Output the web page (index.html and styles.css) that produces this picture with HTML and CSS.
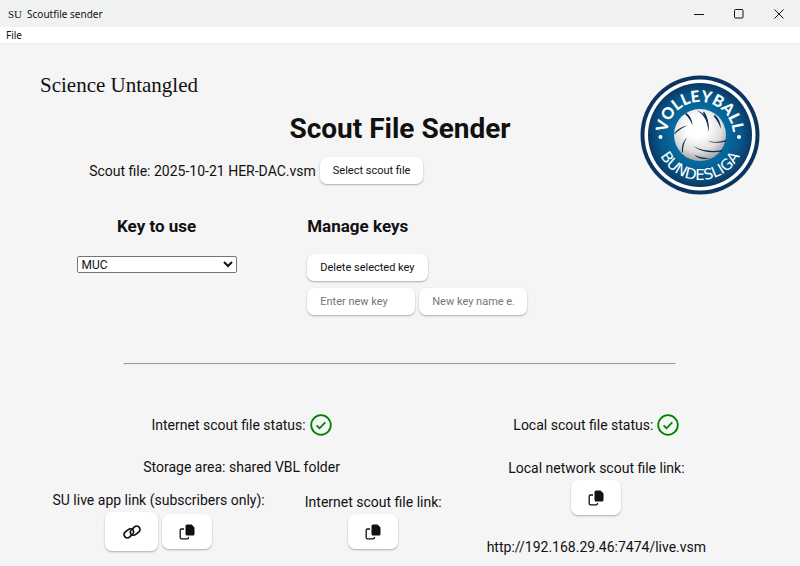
FILE: index.html
```html
<!DOCTYPE html>
<html lang="en">
<head>
    <meta charset="UTF-8">
    <meta name="viewport" content="width=device-width, initial-scale=1.0">
    <title>Scoutfile sender</title>
    <link rel="stylesheet" href="styles.css">
</head>
<body>
    <svg class="defs" width="0" height="0" aria-hidden="true">
        <symbol id="icon-copy" viewBox="0 0 16 16">
            <path d="M8 .5h4.600l2.900 2.900v6.600a1.500 1.500 0 0 1-1.500 1.500H8A1.500 1.500 0 0 1 6.500 10V2A1.500 1.500 0 0 1 8 .5z" fill="#111"/>
            <path d="M5 5H2.500a1.300 1.300 0 0 0-1.300 1.300v7.200a1.300 1.300 0 0 0 1.300 1.300h5.700a1.300 1.300 0 0 0 1.300-1.300V13" fill="none" stroke="#111" stroke-width="1.300"/>
        </symbol>
        <symbol id="icon-link" viewBox="0 0 18 16">
            <g fill="none" stroke="#111" stroke-width="1.700" stroke-linecap="round">
                <path d="M8.300 11.300L6.700 12.900a3.300 3.300 0 0 1-4.700-4.700L5.300 5.600a3.300 3.300 0 0 1 5 .7c.7 1.300.5 2.600-.5 3.700"/>
                <path d="M9.700 4.700l1.600-1.600a3.300 3.300 0 0 1 4.700 4.700l-3.300 2.600a3.300 3.300 0 0 1-5-.7c-.7-1.300-.5-2.600.5-3.700"/>
            </g>
        </symbol>
        <symbol id="icon-check" viewBox="0 0 22 22">
            <circle cx="11" cy="11" r="9.800" fill="none" stroke="green" stroke-width="1.800"/>
            <path d="M6.600 11.400l2.900 2.900 5.800-6" fill="none" stroke="green" stroke-width="1.800"/>
        </symbol>
    </svg>

    <div class="titlebar">
        <span class="app-icon">SU</span>
        <span class="app-title">Scoutfile sender</span>
        <button class="win-btn" aria-label="Minimize"><svg width="10" height="10"><path d="M0 5.500h10" stroke="#111"/></svg></button>
        <button class="win-btn" aria-label="Maximize"><svg width="10" height="10"><rect x=".5" y=".5" width="8.500" height="8.500" rx="1" fill="none" stroke="#111"/></svg></button>
        <button class="win-btn" aria-label="Close"><svg width="10" height="10"><path d="M.5 .5l9 9M9.500 .5l-9 9" stroke="#111"/></svg></button>
    </div>
    <nav class="menubar"><button class="menu-btn">File</button></nav>

    <main>
        <header class="top">
            <div class="brand">Science Untangled</div>
            <h1>Scout File Sender</h1>
            <svg class="badge" viewBox="0 0 120 120" role="img" aria-label="Volleyball Bundesliga">
                <defs>
                    <radialGradient id="blue">
                        <stop offset=".5" stop-color="#046ba3"/>
                        <stop offset=".8" stop-color="#075687"/>
                        <stop offset="1" stop-color="#0a3763"/>
                    </radialGradient>
                    <radialGradient id="ball" cx=".45" cy=".35" r=".68">
                        <stop offset=".3" stop-color="#fff"/>
                        <stop offset=".7" stop-color="#ddd"/>
                        <stop offset="1" stop-color="#999"/>
                    </radialGradient>
                    <path id="arc-top" d="M60 93a33 33 0 0 1 0-66a33 33 0 0 1 0 66"/>
                    <path id="arc-bottom" d="M60 15a45 45 0 0 0 0 90a45 45 0 0 0 0-90"/>
                </defs>
                <circle cx="60" cy="60" r="59.500" fill="#0b3560"/>
                <circle cx="60" cy="60" r="55.500" fill="#fff"/>
                <circle cx="60" cy="60" r="52" fill="url(#blue)"/>
                <circle cx="60" cy="60" r="26" fill="url(#ball)"/>
                <g fill="#0b2c52">
                    <path d="M46.500 38q5.500 4 6 12.500q-2.500-7-7.500-11.500z"/>
                    <path d="M57 35.500q13 4 11.500 21.500q-1-16-11.500-21.500z"/>
                    <path d="M64 36.500q5.500 7 4.500 20q-1-12-5.500-19z"/>
                    <path d="M75 40q5.500 5 6 14q-3-8-7.500-13z"/>
                    <path d="M34.500 58q4.500-6 13-7.500q-7.500 3-13 9z"/>
                    <path d="M42 77q-1-9 5-14.500q-4.500 7-4 15.500z"/>
                    <path d="M53 71q13 7 30 4l-1.500 1.500q-17 3-28.500-5.500z"/>
                    <path d="M67 65.500q8 3 19-.5v1.500q-12 3-19-1z"/>
                    <path d="M54 80q9 4 17 3q-10 3-17-3z"/>
                </g>
                <circle cx="20.500" cy="62" r="2" fill="#fff"/>
                <circle cx="99" cy="62" r="2" fill="#fff"/>
                <text class="badge-top"><textPath href="#arc-top" startOffset="50%">VOLLEYBALL</textPath></text>
                <text class="badge-bottom"><textPath href="#arc-bottom" startOffset="50%">BUNDESLIGA</textPath></text>
            </svg>
            <div class="file-row">
                <span>Scout file: 2025-10-21 HER-DAC.vsm</span>
                <button class="btn">Select scout file</button>
            </div>
        </header>

        <section class="keys">
            <div class="key-use">
                <h2><label for="key">Key to use</label></h2>
                <select id="key">
                    <option>MUC</option>
                </select>
            </div>
            <div class="key-manage">
                <h2>Manage keys</h2>
                <button class="btn">Delete selected key</button>
                <div class="new-key">
                    <input class="btn" type="text" placeholder="Enter new key" aria-label="New key">
                    <input class="btn" type="text" placeholder="New key name e.g. club" aria-label="New key name">
                </div>
            </div>
        </section>

        <hr>

        <section class="status">
            <div class="internet">
                <p class="state">Internet scout file status: <svg class="check"><use href="#icon-check"/></svg></p>
                <p class="storage">Storage area: shared VBL folder</p>
                <div class="links">
                    <div>
                        <p>SU live app link (subscribers only):</p>
                        <div class="link-btns">
                            <button class="icon-btn large" aria-label="Open live app"><svg class="link"><use href="#icon-link"/></svg></button>
                            <button class="icon-btn" aria-label="Copy live app link"><svg class="copy"><use href="#icon-copy"/></svg></button>
                        </div>
                    </div>
                    <div>
                        <p>Internet scout file link:</p>
                        <div class="link-btns">
                            <button class="icon-btn" aria-label="Copy internet link"><svg class="copy"><use href="#icon-copy"/></svg></button>
                        </div>
                    </div>
                </div>
            </div>
            <div class="local">
                <p class="state">Local scout file status: <svg class="check"><use href="#icon-check"/></svg></p>
                <p class="local-label">Local network scout file link:</p>
                <div class="link-btns">
                    <button class="icon-btn" aria-label="Copy local link"><svg class="copy"><use href="#icon-copy"/></svg></button>
                </div>
                <p class="url">http://192.168.29.46:7474/live.vsm</p>
            </div>
        </section>
    </main>
</body>
</html>
```
FILE: styles.css
```css
body {
    margin: 0;
    background-color: #f5f5f5;
    color: #111;
    font-family: Roboto, sans-serif;
    font-size: 14px;
    line-height: 20px;
}
h1, h2, p {
    margin: 0;
}
button, input, select {
    font-family: inherit;
    color: inherit;
}
svg {
    display: block;
}
.defs {
    position: absolute;
}

/* window frame */
.titlebar {
    display: flex;
    align-items: center;
    height: 27px;
    padding: 0 1px 0 8px;
    background-color: #f0f2f2;
}
.app-icon {
    font-family: "Liberation Serif", serif;
    font-size: 11px;
}
.app-title {
    flex: 1;
    padding-left: 5px;
    font-family: "Noto Sans", sans-serif;
    font-size: 10px;
}
.win-btn {
    display: flex;
    align-items: center;
    justify-content: center;
    width: 40px;
    height: 26px;
    padding: 0;
    border: none;
    background: none;
}
.menubar {
    display: flex;
    height: 16px;
    border-bottom: 1px solid #eee;
    background-color: #fff;
}
.menu-btn {
    padding: 0 6px;
    border: none;
    background: none;
    font-family: "Noto Sans", sans-serif;
    font-size: 10px;
}

main {
    padding: 31px 40px 0;
}

.top {
    display: grid;
    grid-template-columns: 1fr auto 1fr;
    grid-template-rows: 32px 43px 41px 4px;
}
.brand {
    font-family: "Liberation Serif", serif;
    font-size: 21px;
    white-space: nowrap;
}
h1 {
    grid-area: 2 / 2;
    font-size: 28px;
    line-height: 43px;
}
.badge {
    grid-area: 1 / 3 / 5 / 4;
    justify-self: end;
    width: 120px;
    height: 120px;
}
.badge-top, .badge-bottom {
    fill: #fff;
    font-family: Lato, sans-serif;
    font-size: 16px;
    font-weight: 900;
    text-anchor: middle;
}
.badge-bottom {
    font-family: "DejaVu Sans", sans-serif;
    font-size: 15px;
    font-weight: 400;
}
.file-row {
    grid-area: 3 / 1 / 4 / 3;
    display: flex;
    justify-content: center;
    align-items: center;
    gap: 4px;
    padding-right: 38px;
}

.btn {
    height: 27px;
    padding: 0 13px;
    border: none;
    border-radius: 7px;
    background-color: #fff;
    box-shadow: 0 1px 2px rgba(0, 0, 0, .3);
    font-size: 11px;
}

.keys {
    display: grid;
    grid-template-columns: 34fr 66fr;
    gap: 34px;
    margin-top: 19px;
}
h2 {
    margin-bottom: 16px;
    font-size: 17px;
    line-height: 24px;
}
.key-use {
    text-align: center;
}
select {
    width: 160px;
    height: 17px;
    border: 1px solid #767676;
    border-radius: 2px;
    background-color: #fff;
    font-size: 12px;
}
.new-key {
    display: flex;
    gap: 4px;
    margin-top: 7px;
}
.new-key .btn {
    box-sizing: border-box;
    width: 108px;
}
.btn::placeholder {
    color: #757575;
}

hr {
    margin: 48px 84px 0;
}

.status {
    display: grid;
    grid-template-columns: 56% 42%;
    gap: 2px;
    margin-top: 48px;
    text-align: center;
}
.state {
    display: flex;
    justify-content: center;
    align-items: center;
    gap: 4px;
    height: 24px;
}
.check {
    width: 22px;
    height: 22px;
}
.storage {
    margin-top: 20px;
}
.links {
    display: grid;
    grid-template-columns: 5fr 3fr;
    align-items: center;
    gap: 28px;
    margin-top: 13px;
    padding-left: 2px;
    white-space: nowrap;
}
.link-btns {
    display: flex;
    justify-content: center;
    align-items: center;
    gap: 4px;
    margin-top: 2px;
}
.icon-btn {
    display: flex;
    align-items: center;
    justify-content: center;
    width: 50px;
    height: 35px;
    padding: 0;
    border: none;
    border-radius: 7px;
    background-color: #fff;
    box-shadow: 0 1px 2px rgba(0, 0, 0, .3);
}
.icon-btn.large {
    width: 53px;
    height: 39px;
}
.copy {
    width: 16px;
    height: 16px;
}
.link {
    width: 18px;
    height: 16px;
}
.local-label {
    margin-top: 21px;
}
.url {
    margin-top: 22px;
}
```
